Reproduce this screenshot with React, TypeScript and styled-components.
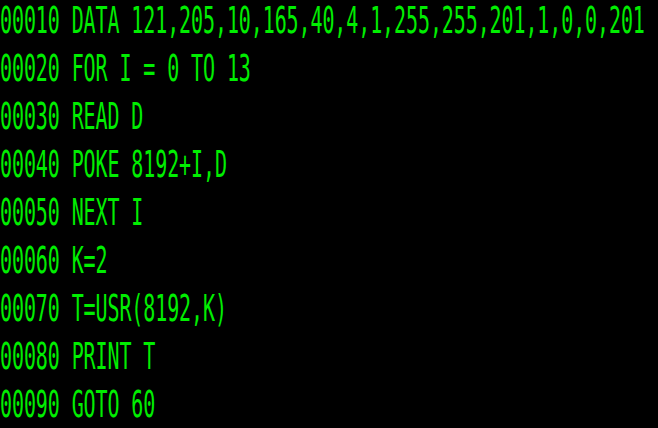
import React from "react";
import styled, { createGlobalStyle } from "styled-components";

const Global = createGlobalStyle`
  html, body {
    margin: 0;
    padding: 0;
    background: #000;
  }
`;

const Screen = styled.div`
  display: flex;
  flex-direction: column;
  width: 658px;
  height: 428px;
  background: #000;
`;

const Line = styled.div`
  display: flex;
  align-items: flex-start;
  height: 48px;
  flex: 0 0 48px;
`;

const Text = styled.span`
  display: inline-block;
  font-family: "DejaVu Sans Mono", "Liberation Mono", monospace;
  font-size: 20px;
  line-height: 22px;
  letter-spacing: -0.1px;
  color: #00ee00;
  white-space: pre;
  transform: scaleY(1.85);
  transform-origin: 0 0;
`;

const program = [
  "00010 DATA 121,205,10,165,40,4,1,255,255,201,1,0,0,201",
  "00020 FOR I = 0 TO 13",
  "00030 READ D",
  "00040 POKE 8192+I,D",
  "00050 NEXT I",
  "00060 K=2",
  "00070 T=USR(8192,K)",
  "00080 PRINT T",
  "00090 GOTO 60",
];

export default function App() {
  return (
    <>
      <Global />
      <Screen>
        {program.map((l) => (
          <Line key={l}>
            <Text>{l}</Text>
          </Line>
        ))}
      </Screen>
    </>
  );
}
